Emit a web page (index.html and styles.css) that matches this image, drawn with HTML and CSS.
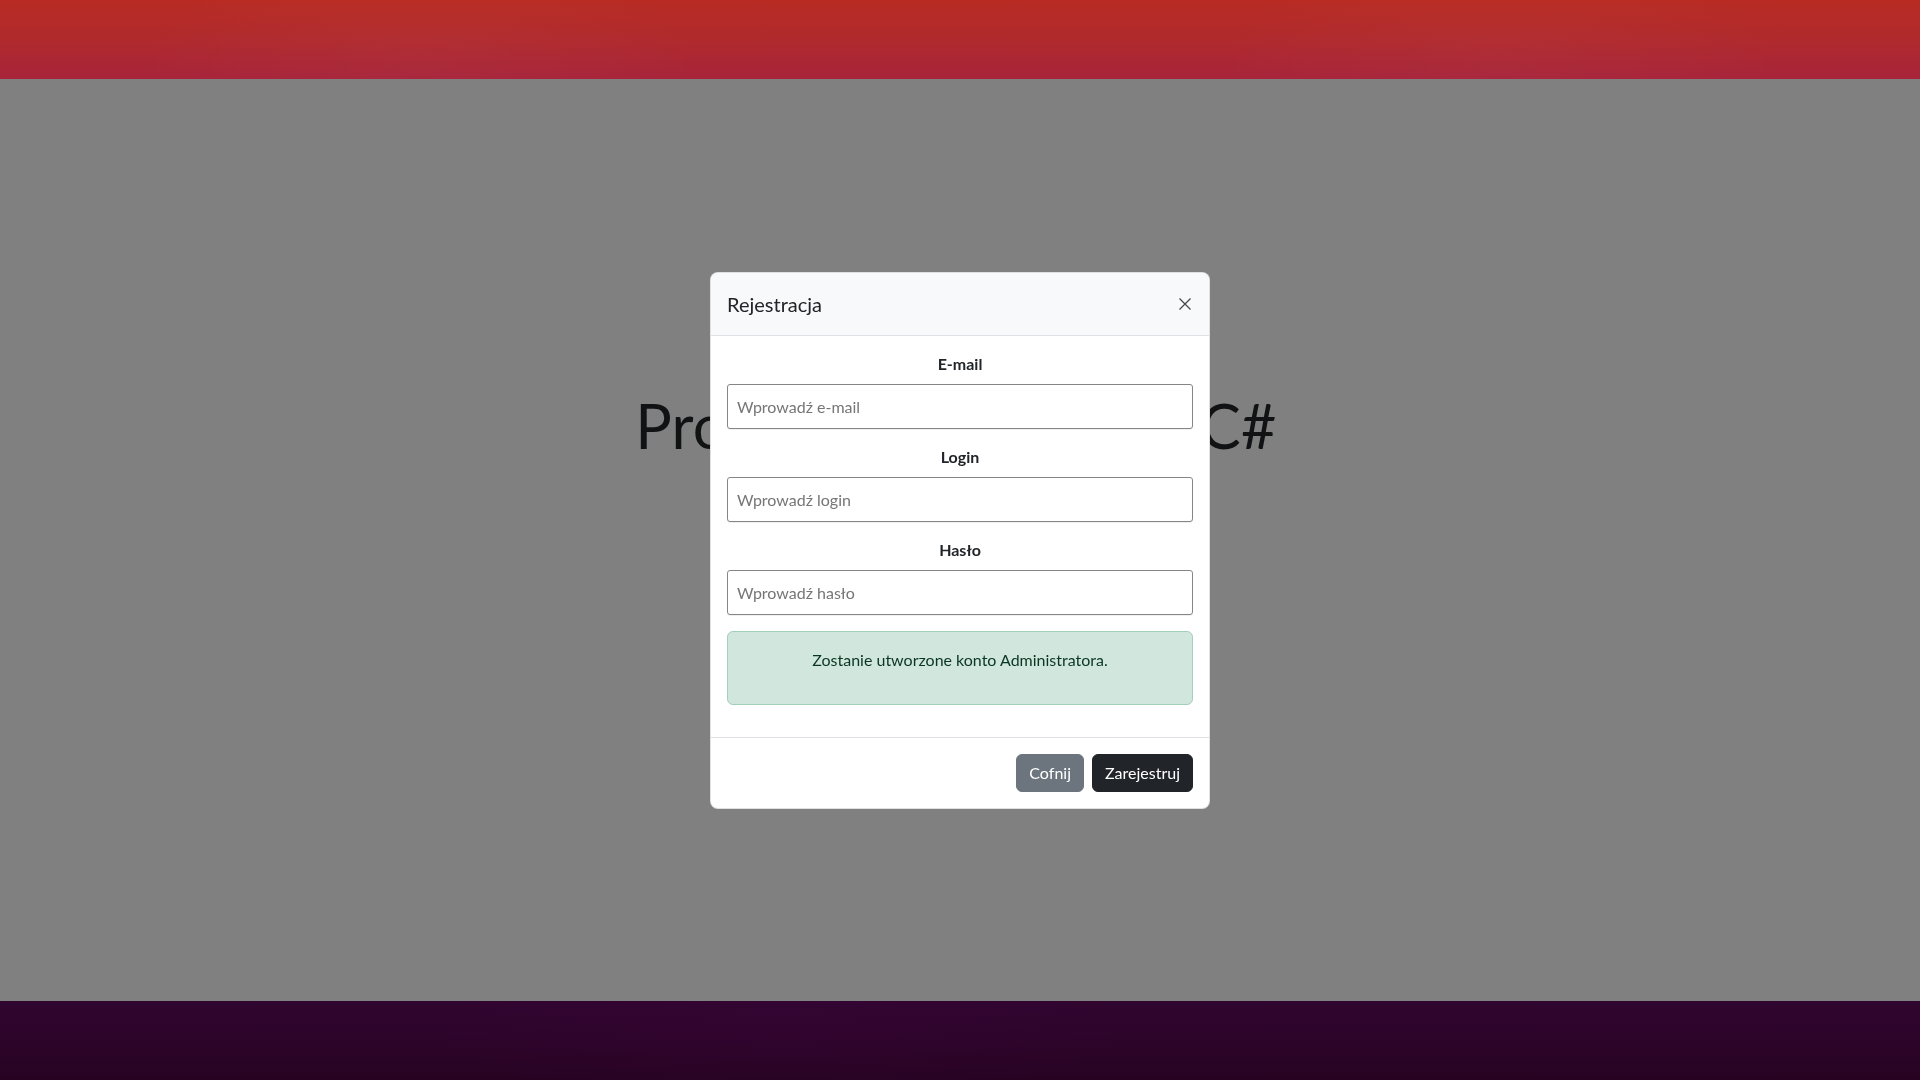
FILE: index.html
```html
<!DOCTYPE html>
<html lang="pl">
<head>
<meta charset="utf-8">
<title>Rejestracja</title>
<link rel="stylesheet" href="styles.css">
</head>
<body>
<header class="topbar"></header>
<main class="main">
  <h1 class="hero">Projekt zaliczeniowy C#</h1>
</main>
<footer class="bottombar"></footer>

<div class="modal">
  <div class="modal-dialog">
    <div class="modal-header">
      <h5 class="modal-title">Rejestracja</h5>
      <button class="btn-close" type="button" aria-label="Zamknij">
        <svg width="12" height="12" viewBox="0 0 12 12"><path d="M0.5 0.5L11.5 11.5M11.5 0.5L0.5 11.5" stroke="#444" stroke-width="1.2" fill="none"/></svg>
      </button>
    </div>
    <div class="modal-body">
      <div class="field">
        <label class="form-label" for="email">E-mail</label>
        <input class="form-control" id="email" type="text" placeholder="Wprowadź e-mail">
      </div>
      <div class="field">
        <label class="form-label" for="login">Login</label>
        <input class="form-control" id="login" type="text" placeholder="Wprowadź login">
      </div>
      <div class="field">
        <label class="form-label" for="pass">Hasło</label>
        <input class="form-control" id="pass" type="password" placeholder="Wprowadź hasło">
      </div>
      <div class="alert">
        <p>Zostanie utworzone konto Administratora.</p>
      </div>
    </div>
    <div class="modal-footer">
      <button class="btn btn-secondary" type="button">Cofnij</button>
      <button class="btn btn-dark" type="button">Zarejestruj</button>
    </div>
  </div>
</div>
</body>
</html>
```
FILE: styles.css
```css
* { box-sizing: border-box; }
html, body { height: 100%; }
body {
  margin: 0;
  font-family: Lato, "Liberation Sans", sans-serif;
  font-size: 16px;
  line-height: 1.5;
  color: #212529;
  display: flex;
  flex-direction: column;
  background: #808080;
}
.topbar {
  height: 79px;
  flex: none;
  background:
    radial-gradient(ellipse 420px 160px at 420px 60px, rgba(255,255,255,0.025), rgba(255,255,255,0) 70%),
    radial-gradient(ellipse 420px 160px at 1500px 60px, rgba(255,255,255,0.025), rgba(255,255,255,0) 70%),
    linear-gradient(180deg, #b82b23 0%, #b02a2d 50%, #a7243a 100%);
}
.main {
  flex: 1;
  background: #808080;
  padding-top: 311px;
  text-align: center;
}
.hero {
  margin: 0;
  padding-right: 8px;
  font-size: 61px;
  line-height: 72px;
  letter-spacing: 0.3px;
  font-weight: 400;
  color: #111213;
}
.bottombar {
  height: 79px;
  flex: none;
  background:
    radial-gradient(ellipse 500px 120px at 780px 20px, rgba(80,0,80,0.12), rgba(80,0,80,0) 70%),
    linear-gradient(180deg, #30052f 0%, #2c0429 55%, #270322 100%);
}

.modal {
  position: fixed;
  inset: 0;
  display: flex;
  align-items: center;
  justify-content: center;
}
.modal-dialog {
  width: 500px;
  background: #fff;
  border: 1px solid rgba(0,0,0,0.12);
  border-radius: 8px;
  overflow: hidden;
}
.modal-header {
  display: flex;
  align-items: center;
  justify-content: space-between;
  padding: 16px;
  background: #f8f9fa;
  border-bottom: 1px solid #dee2e6;
}
.modal-title {
  margin: 0;
  font-size: 20px;
  line-height: 30px;
  font-weight: 400;
  color: #212529;
}
.btn-close {
  width: 32px;
  height: 32px;
  margin: -8px -8px -8px auto;
  padding: 0;
  border: 0;
  background: transparent;
  display: flex;
  align-items: center;
  justify-content: center;
}
.modal-body {
  padding: 16px;
}
.field {
  margin-bottom: 16px;
  text-align: center;
}
.form-label {
  display: block;
  margin-bottom: 8px;
  font-weight: 700;
  line-height: 24px;
  color: #212529;
}
.form-control {
  display: block;
  width: 100%;
  height: 45px;
  padding: 0 9px;
  font-family: inherit;
  font-size: 16px;
  color: #212529;
  background: #fff;
  border: 1px solid #858585;
  border-radius: 3px;
  box-shadow: 0 1px 0 rgba(0,0,0,0.06);
}
.form-control::placeholder { color: #767676; }
.alert {
  margin-bottom: 16px;
  padding: 16px;
  background: #d1e7dd;
  border: 1px solid #a3cfbb;
  border-radius: 6px;
  color: #0a3622;
  text-align: center;
}
.alert p { margin: 0 0 16px; line-height: 24px; }
.modal-footer {
  display: flex;
  justify-content: flex-end;
  align-items: center;
  gap: 8px;
  padding: 16px;
  border-top: 1px solid #dee2e6;
}
.btn {
  font-family: inherit;
  font-size: 16px;
  line-height: 24px;
  padding: 6px 12px;
  border: 1px solid transparent;
  border-radius: 6px;
  color: #fff;
}
.btn-secondary { background: #6c757d; border-color: #6c757d; }
.btn-dark { background: #212529; border-color: #212529; }
```
